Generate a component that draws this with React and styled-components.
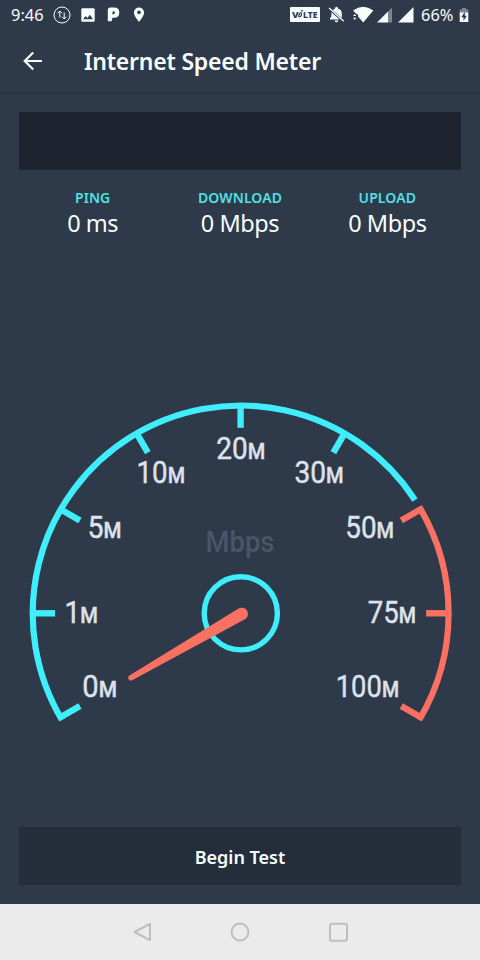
import React from "react";
import styled, { createGlobalStyle } from "styled-components";

const GlobalStyle = createGlobalStyle`
  * { box-sizing: border-box; }
  body { margin: 0; background: #2e3a49; }
`;

const cyan = "#3feefa";
const coral = "#f97163";
const ink = "#f6fdff";

const Screen = styled.div`
  width: 480px;
  height: 960px;
  display: flex;
  flex-direction: column;
  background: #2e3a49;
  color: ${ink};
  font-family: "Noto Sans", sans-serif;
  overflow: hidden;
`;

const StatusBar = styled.div`
  height: 29px;
  padding: 0 11px;
  display: flex;
  justify-content: space-between;
  align-items: center;
`;

const StatusGroup = styled.div`
  display: flex;
  align-items: center;
`;

const StatusText = styled.span`
  display: block;
  flex: none;
  width: ${(p) => p.$width}px;
  margin-left: ${(p) => p.$gap || 0}px;
  font-size: 16.4px;
  line-height: 28px;
  white-space: nowrap;
`;

const StatusIcon = styled.svg`
  display: block;
  flex: none;
  margin-left: ${(p) => p.$gap || 0}px;
`;

const AppBar = styled.header`
  height: 65px;
  padding-left: 22px;
  display: flex;
  align-items: center;
  border-bottom: 2px solid #2a3542;
`;

const BackButton = styled.button`
  width: 22px;
  height: 22px;
  margin-right: 39px;
  padding: 0;
  border: 0;
  background: none;
  color: ${ink};
`;

const Title = styled.h1`
  margin: 0 0 0 1px;
  font-size: 23px;
  font-weight: 600;
  line-height: 30px;
  letter-spacing: -0.22px;
  white-space: nowrap;
`;

const Banner = styled.div`
  height: 58px;
  margin: 18px 19px 0;
  background: #1e2530;
`;

const Stats = styled.section`
  margin: 17px 19px 0;
  display: grid;
  grid-template-columns: repeat(3, 1fr);
  text-align: center;
`;

const StatLabel = styled.div`
  color: #4ee1e6;
  font-size: 14px;
  font-weight: 600;
  line-height: 21px;
  letter-spacing: 0.1px;
`;

const StatValue = styled.div`
  font-size: 23.5px;
  line-height: 31px;
  letter-spacing: -0.45px;
`;

const GaugeArea = styled.main`
  flex: 1;
  display: flex;
  align-items: flex-end;
  padding-bottom: 87px;
`;

const GaugeDrawing = styled.svg`
  display: block;
  width: 480px;
  height: 350px;
  font-family: Roboto, sans-serif;
`;

const BeginButton = styled.button`
  height: 58px;
  margin: 0 19px 19px;
  padding: 1px 0 0;
  border: 0;
  background: #232e3a;
  color: ${ink};
  font-family: inherit;
  font-size: 18px;
  font-weight: 600;
  letter-spacing: 0;
`;

const NavBar = styled.nav`
  height: 56px;
  padding: 0 130px;
  display: flex;
  justify-content: space-between;
  align-items: center;
  background: #ebebeb;
`;

const NavIcon = styled.svg`
  display: block;
  width: 24px;
  height: 24px;
  fill: none;
  stroke: #bebebe;
  stroke-width: 2;
  stroke-linejoin: round;
`;

const CX = 240.6;
const CY = 613.3;
const at = (deg, r) => {
  const a = (deg * Math.PI) / 180;
  return `${(CX + r * Math.cos(a)).toFixed(2)} ${(CY - r * Math.sin(a)).toFixed(2)}`;
};

const marks = [
  { n: "0", angle: 210, left: 82.3, right: 117, y: 697 },
  { n: "1", angle: 180, left: 64.5, right: 98, y: 622.7 },
  { n: "5", angle: 150, left: 87.5, right: 121.5, y: 538 },
  { n: "10", angle: 120, left: 136.5, right: 185, y: 483 },
  { n: "20", angle: 90, left: 216.3, right: 265.3, y: 459 },
  { n: "30", angle: 60, left: 294.5, right: 343.7, y: 483 },
  { n: "50", angle: 30, left: 345.3, right: 394, y: 538 },
  { n: "75", angle: 0, left: 367.8, right: 416, y: 622.7 },
  { n: "100", angle: -30, left: 335.7, right: 399, y: 697 },
];

function Mark({ n, angle, left, right, y }) {
  return (
    <g>
      <path d={`M${at(angle, 209)}L${at(angle, 185.5)}`} stroke={angle <= 30 ? coral : cyan} strokeWidth="6.4" />
      <text
        x={left}
        y={y}
        fontSize="30.5"
        fill="#dfe2ec"
        stroke="#dfe2ec"
        strokeWidth="0.4"
        textLength={right - left}
        lengthAdjust="spacingAndGlyphs"
      >
        {n}
        <tspan fontSize="21.8" fontWeight="500">M</tspan>
      </text>
    </g>
  );
}

function Gauge() {
  return (
    <GaugeDrawing viewBox="0 390 480 350">
      <g fill="none" strokeWidth="6.2">
        <path d={`M${at(210.8, 208)}A208 208 0 0 1 ${at(33, 208)}`} stroke={cyan} />
        <path d={`M${at(30.8, 208)}A208 208 0 0 1 ${at(-30.8, 208)}`} stroke={coral} />
      </g>
      {marks.map((m) => <Mark key={m.n} {...m} />)}
      <text x="205.5" y="551.7" fontSize="29" fontWeight="500" fill="#495568" textLength="69" lengthAdjust="spacingAndGlyphs">Mbps</text>
      <circle cx={CX + 0.2} cy={CY} r="36.6" fill="none" stroke={cyan} strokeWidth="5.4" />
      <path d="M238.6 608.5L129.8 675.2A2.7 2.7 0 0 0 132.2 680.2L244.9 619.3A6.2 6.2 0 0 0 238.6 608.5Z" fill={coral} />
    </GaugeDrawing>
  );
}

const stats = [
  ["PING", "0 ms"],
  ["DOWNLOAD", "0 Mbps"],
  ["UPLOAD", "0 Mbps"],
];

export default function App() {
  return (
    <Screen>
      <GlobalStyle />
      <StatusBar>
        <StatusGroup>
          <StatusText $width={42}>9:46</StatusText>
          <StatusIcon width="18" height="18" viewBox="0 0 18 18" fill="none" stroke={ink} strokeWidth="1">
            <circle cx="9" cy="9" r="8" />
            <path d="M6.8 11.5V5.2M4.5 7.3L6.8 5L9.1 7.3M11.2 6.5V12.8M8.9 10.7L11.2 13L13.5 10.7" />
          </StatusIcon>
          <StatusIcon $gap={10} width="14" height="14" viewBox="0 0 14 14">
            <path fill={ink} fillRule="evenodd" d="M1.6.3H12.4Q13.7.3 13.7 1.6V12.4Q13.7 13.7 12.4 13.7H1.6Q.3 13.7.3 12.4V1.6Q.3.3 1.6.3ZM2 11.2H12L8.9 6.8L6.4 10L4.7 8Z" />
          </StatusIcon>
          <StatusIcon $gap={12} width="13" height="15" viewBox="0 0 13 15">
            <path fill={ink} fillRule="evenodd" d="M3.2.6H7Q12.3.6 12.3 5.5Q12.3 10.8 7 10.8H5.4L4.6 14.3H.8V8Q.8 7 .8 5.5V3Q.8.6 3.2.6ZM5.9 4.2L5.2 7.2H6.4Q7.9 7.2 7.9 5.5Q7.9 4.2 6.7 4.2Z" />
          </StatusIcon>
          <StatusIcon $gap={13} width="12" height="15" viewBox="0 0 12 15">
            <path fill={ink} fillRule="evenodd" d="M6 .4A5.1 5.1 0 0 0 .9 5.5C.9 9.3 6 14.8 6 14.8S11.1 9.3 11.1 5.5A5.1 5.1 0 0 0 6 .4ZM6 3.6A1.8 1.8 0 1 1 6 7.2A1.8 1.8 0 0 1 6 3.6Z" />
          </StatusIcon>
        </StatusGroup>
        <StatusGroup>
          <StatusIcon width="30" height="15" viewBox="0 0 30 15">
            <rect width="30" height="15" rx="1" fill={ink} />
            <g fill="#2e3a49" fontFamily="Noto Sans, sans-serif" fontWeight="800" fontSize="8.8">
              <text x="2" y="10.7" textLength="6.6" lengthAdjust="spacingAndGlyphs">V</text>
              <text x="13" y="10.7" textLength="14.5" lengthAdjust="spacingAndGlyphs">LTE</text>
            </g>
            <path d="M11.6 5.6Q8.3 6.6 8.8 10M8.8 10Q12 9.4 11.6 6.5M10.8 4.3L13 3.6" fill="none" stroke="#2e3a49" strokeWidth="1.1" />
          </StatusIcon>
          <StatusIcon $gap={8} width="17" height="17" viewBox="0 0 17 17">
            <path fill={ink} d="M2 13.4V12.2L3.4 10.6V6.2L11.6 13.4ZM4.9 4.2Q6.1 2.9 7.2 2.5V1.6Q8.5 0 9.8 1.6V2.5Q13.8 3.5 13.8 7.5V11.9ZM6.6 14.4H10.4Q9.9 16.3 8.5 16.3T6.6 14.4Z" />
            <path d="M1.1 2.1L15.8 15.2" stroke={ink} strokeWidth="1.3" />
          </StatusIcon>
          <StatusIcon $gap={7} width="22" height="17" viewBox="0 0 22 17">
            <path fill={ink} d="M1 4.4Q11.2-2.8 21.3 4.4L11.2 16.5L6 10.4V8.4L4 7.4Z" />
            <path fill={ink} d="M1 10L2.7 7.9L4.4 10ZM1 11.8H4.4L2.7 13.9Z" />
          </StatusIcon>
          <StatusIcon $gap={3} width="16" height="16" viewBox="0 0 16 16">
            <path fill={ink} d="M0 15.5L11 4.5V15.5Z" />
            <path fill="#7c8590" d="M11 4.5L15 .5V15.5H11Z" />
          </StatusIcon>
          <StatusIcon $gap={5} width="16" height="16" viewBox="0 0 16 16">
            <path fill={ink} d="M0 15.5L15.5 0V15.5Z" />
          </StatusIcon>
          <StatusText $gap={7.5} $width={38}>66%</StatusText>
          <StatusIcon width="10" height="16" viewBox="0 0 10 16">
            <path fill="#7c8590" d="M3 1H7V2.5H9.3V6H.7V2.5H3Z" />
            <path fill={ink} d="M.7 5.5H9.3V15H.7Z" />
            <path fill="#2e3a49" d="M5.8 4.8L2.3 10.2H4.5V14L7.8 8.8H5.8Z" />
          </StatusIcon>
        </StatusGroup>
      </StatusBar>
      <AppBar>
        <BackButton aria-label="Back">
          <svg width="22" height="22" viewBox="0 0 22 22" fill="none" stroke="currentColor" strokeWidth="2.2">
            <path d="M20 11H3M11.2 2.5L2.7 11L11.2 19.5" />
          </svg>
        </BackButton>
        <Title>Internet Speed Meter</Title>
      </AppBar>
      <Banner />
      <Stats>
        {stats.map(([label, value]) => (
          <div key={label}>
            <StatLabel>{label}</StatLabel>
            <StatValue>{value}</StatValue>
          </div>
        ))}
      </Stats>
      <GaugeArea><Gauge /></GaugeArea>
      <BeginButton>Begin Test</BeginButton>
      <NavBar>
        <NavIcon viewBox="0 0 24 24"><path d="M4.5 12L20 3.8V20.2Z" /></NavIcon>
        <NavIcon viewBox="0 0 24 24"><circle cx="12" cy="12" r="8.4" /></NavIcon>
        <NavIcon viewBox="0 0 24 24"><rect x="4" y="3.7" width="17" height="17" rx="2" /></NavIcon>
      </NavBar>
    </Screen>
  );
}
